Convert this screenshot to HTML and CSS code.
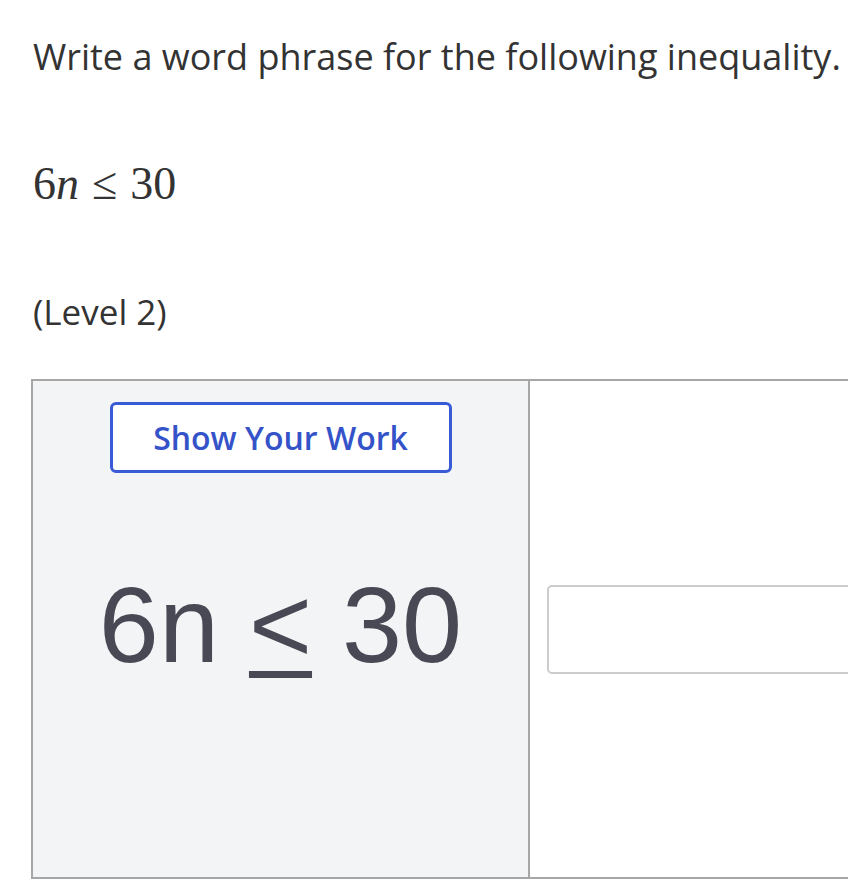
FILE: index.html
```html
<!DOCTYPE html>
<html>
<head>
<meta charset="utf-8">
<link rel="stylesheet" href="styles.css">
</head>
<body>
<div class="page">
  <h1 class="prompt">Write a word phrase for the following inequality.</h1>
  <div class="math"><span class="num">6</span><span class="var">n</span><span class="rel">≤</span><span class="num">30</span></div>
  <p class="level">(Level 2)</p>
  <div class="work">
    <div class="work-left">
      <button class="show-btn">Show Your Work</button>
      <div class="big-eq">6n <span class="le">&lt;</span> 30</div>
    </div>
    <div class="work-right">
      <div class="answer"></div>
    </div>
  </div>
</div>
</body>
</html>
```
FILE: styles.css
```css
html, body {
  margin: 0;
  padding: 0;
  background: #ffffff;
  overflow: hidden;
}
.page {
  width: 848px;
  height: 896px;
  overflow: hidden;
  font-family: "Open Sans", "Liberation Sans", sans-serif;
  color: #333333;
}
.prompt {
  margin: 0;
  padding: 33px 0 0 33px;
  font-size: 36px;
  font-weight: 400;
  line-height: 48px;
  white-space: nowrap;
}
.math {
  margin: 75px 0 0 33px;
  font-family: "Liberation Serif", "DejaVu Serif", serif;
  font-size: 46px;
  line-height: 56px;
  color: #333333;
  white-space: nowrap;
}
.math .var { font-style: italic; }
.math .rel { margin: 0 13px; }
.level {
  margin: 76px 0 0 33px;
  font-size: 35px;
  line-height: 48px;
}
.work {
  margin: 43px 0 0 31px;
  width: 900px;
  height: 496px;
  display: grid;
  grid-template-columns: 497px 1fr;
  border: 2px solid #a6a6a6;
}
.work-left {
  background: #f3f4f6;
  border-right: 2px solid #a6a6a6;
  display: flex;
  flex-direction: column;
  align-items: center;
}
.show-btn {
  margin-top: 21px;
  width: 342px;
  height: 71px;
  background: #ffffff;
  border: 3px solid #3a5bd6;
  border-radius: 6px;
  color: #3553c9;
  font-family: "Open Sans", "Liberation Sans", sans-serif;
  font-weight: 600;
  font-size: 32px;
}
.big-eq {
  margin-top: 92px;
  font-family: "Liberation Sans", Arial, sans-serif;
  font-size: 108px;
  line-height: 120px;
  color: #494955;
  white-space: nowrap;
}
.le {
  text-decoration: underline;
  text-decoration-thickness: 7px;
  text-underline-offset: 9px;
  text-decoration-skip-ink: none;
}
.work-right {
  display: flex;
  align-items: center;
  padding-left: 17px;
}
.answer {
  width: 400px;
  height: 85px;
  border: 2px solid #cccccc;
  border-radius: 5px;
}
```
